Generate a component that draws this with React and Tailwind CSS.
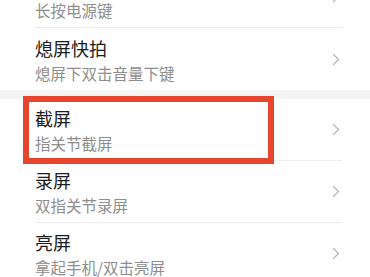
import React from 'react';

const font = { fontFamily: '"Noto Sans CJK SC", "Noto Sans", sans-serif' };

function Chevron() {
  return (
    <svg width="8" height="13" viewBox="0 0 8 13" className="shrink-0">
      <polyline points="1.5,1.5 6.5,6.5 1.5,11.5" fill="none" stroke="#b8b8b8" strokeWidth="1.4" strokeLinecap="round" strokeLinejoin="round" />
    </svg>
  );
}

function Row({ title, sub, last, highlight }) {
  return (
    <div className="relative ml-[35px] mr-[28px]">
      <div className={`flex items-center justify-between h-[62px] ${last ? '' : 'border-b border-[#ececec]'}`}>
        <div className="flex flex-col pt-[1px]">
          <span className="h-[22px] text-[18px] leading-[22px] text-[#1c1c1c]">{title}</span>
          <span className="mt-[4px] text-[15.5px] leading-[20px] text-[#8e8e8e]">{sub}</span>
        </div>
        <div className="mr-[2px]">
          <Chevron />
        </div>
      </div>
      {highlight && (
        <div className="absolute -top-[3px] -left-[12px] w-[251px] h-[68px] border-[6px] border-[#e8452f]" />
      )}
    </div>
  );
}

export default function App() {
  return (
    <div className="w-[370px] h-[277px] overflow-hidden bg-white" style={font}>
      <div className="-mt-[34px]">
        <div className="bg-white">
          <Row title="" sub="长按电源键" />
          <Row title="熄屏快拍" sub="熄屏下双击音量下键" last />
        </div>
        <div className="h-[9px] bg-[#f4f4f4]" />
        <div className="bg-white">
          <Row title="截屏" sub="指关节截屏" highlight />
          <Row title="录屏" sub="双指关节录屏" />
          <Row title="亮屏" sub="拿起手机/双击亮屏" />
        </div>
      </div>
    </div>
  );
}
